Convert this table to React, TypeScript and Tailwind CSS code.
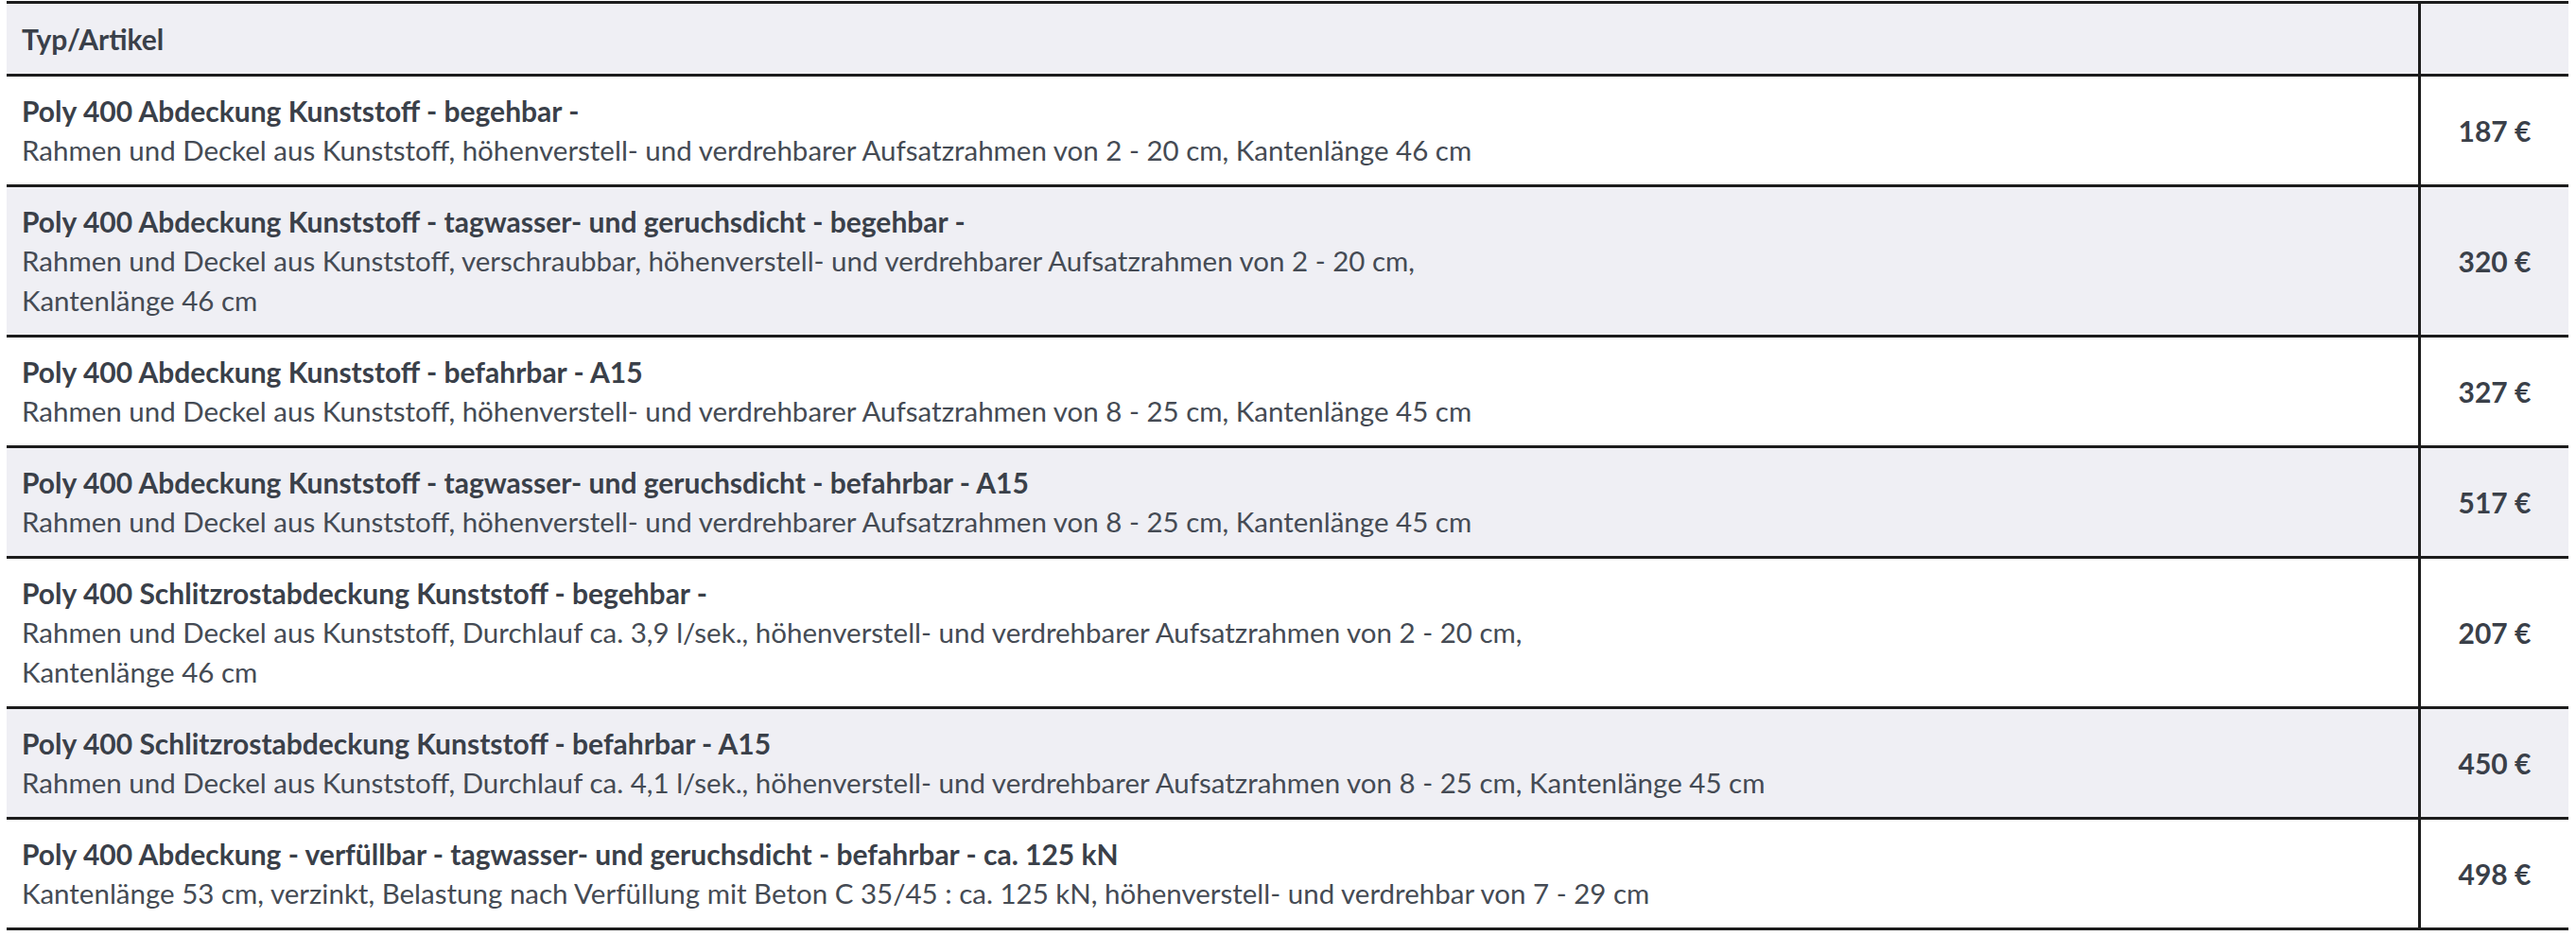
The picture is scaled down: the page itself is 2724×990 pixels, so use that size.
import React from "react";

type Row = { title: string; desc: string[]; price: string };

const rows: Row[] = [
  {
    title: "Poly 400 Abdeckung Kunststoff - begehbar -",
    desc: ["Rahmen und Deckel aus Kunststoff, höhenverstell- und verdrehbarer Aufsatzrahmen von 2 - 20 cm, Kantenlänge 46 cm"],
    price: "187 €",
  },
  {
    title: "Poly 400 Abdeckung Kunststoff - tagwasser- und geruchsdicht - begehbar -",
    desc: [
      "Rahmen und Deckel aus Kunststoff, verschraubbar, höhenverstell- und verdrehbarer Aufsatzrahmen von 2 - 20 cm,",
      "Kantenlänge 46 cm",
    ],
    price: "320 €",
  },
  {
    title: "Poly 400 Abdeckung Kunststoff - befahrbar - A15",
    desc: ["Rahmen und Deckel aus Kunststoff, höhenverstell- und verdrehbarer Aufsatzrahmen von 8 - 25 cm, Kantenlänge 45 cm"],
    price: "327 €",
  },
  {
    title: "Poly 400 Abdeckung Kunststoff - tagwasser- und geruchsdicht - befahrbar - A15",
    desc: ["Rahmen und Deckel aus Kunststoff, höhenverstell- und verdrehbarer Aufsatzrahmen von 8 - 25 cm, Kantenlänge 45 cm"],
    price: "517 €",
  },
  {
    title: "Poly 400 Schlitzrostabdeckung Kunststoff - begehbar -",
    desc: [
      "Rahmen und Deckel aus Kunststoff, Durchlauf ca. 3,9 l/sek., höhenverstell- und verdrehbarer Aufsatzrahmen von 2 - 20 cm,",
      "Kantenlänge 46 cm",
    ],
    price: "207 €",
  },
  {
    title: "Poly 400 Schlitzrostabdeckung Kunststoff - befahrbar - A15",
    desc: [
      "Rahmen und Deckel aus Kunststoff, Durchlauf ca. 4,1 l/sek., höhenverstell- und verdrehbarer Aufsatzrahmen von 8 - 25 cm, Kantenlänge 45 cm",
    ],
    price: "450 €",
  },
  {
    title: "Poly 400 Abdeckung - verfüllbar - tagwasser- und geruchsdicht - befahrbar - ca. 125 kN",
    desc: [
      "Kantenlänge 53 cm, verzinkt, Belastung nach Verfüllung mit Beton C 35/45 : ca. 125 kN, höhenverstell- und verdrehbar von 7 - 29 cm",
    ],
    price: "498 €",
  },
];

export default function App() {
  return (
    <div className="bg-white w-[2724px] min-h-[990px] pt-px" style={{ fontFamily: "Lato, 'Noto Sans', sans-serif" }}>
      <div className="ml-[7px] w-[2709px] leading-[42px] text-[#3a4049]">
        <div className="grid grid-cols-[1fr_159px] border-t-[3px] border-b-[3px] border-[#1c1c1c] bg-[#efeff4]">
          <div className="px-4 py-4 font-bold text-[30px]">Typ/Artikel</div>
          <div className="border-l-[3px] border-[#1c1c1c]"></div>
        </div>
        {rows.map((r, i) => (
          <div
            key={i}
            className={
              "grid grid-cols-[1fr_159px] border-b-[3px] border-[#1c1c1c] " +
              (i % 2 === 1 ? "bg-[#efeff4]" : "bg-white")
            }
          >
            <div className="px-4 py-[15px]">
              <div className="font-bold text-[30px]">{r.title}</div>
              {r.desc.map((d, j) => (
                <div key={j} className="text-[29.5px] text-[#454b54]">
                  {d}
                </div>
              ))}
            </div>
            <div className="border-l-[3px] border-[#1c1c1c] flex items-center justify-center font-bold text-[30px]">
              {r.price}
            </div>
          </div>
        ))}
      </div>
    </div>
  );
}
